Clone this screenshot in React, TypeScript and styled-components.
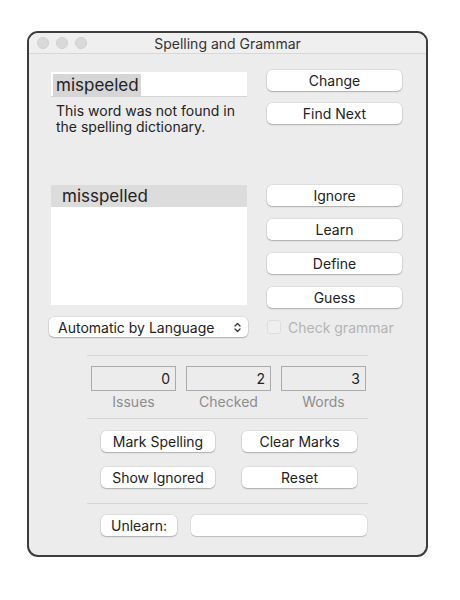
import React from 'react';
import styled, { createGlobalStyle } from 'styled-components';

const GlobalStyle = createGlobalStyle`
  html, body {
    margin: 0;
    padding: 0;
    background: #ffffff;
  }
  body {
    font-family: Inter, "Liberation Sans", sans-serif;
    color: #222222;
  }
`;

const Page = styled.div`
  padding: 31px 0 0 27px;
`;

const Window = styled.div`
  width: 401px;
  height: 526px;
  box-sizing: border-box;
  border: 2px solid #3d3d3d;
  border-radius: 11px;
  background: #ececec;
  overflow: hidden;
  display: flex;
  flex-direction: column;
`;

const TitleBar = styled.div`
  position: relative;
  height: 20px;
  flex-shrink: 0;
  border-bottom: 1px solid #d8d8d8;
  background: #efefef;
  display: flex;
  align-items: center;
  justify-content: center;
  font-size: 14px;
  color: #333333;
`;

const Lights = styled.div`
  position: absolute;
  left: 8px;
  top: 4px;
  display: flex;
  gap: 7px;
`;

const Light = styled.span`
  width: 12px;
  height: 12px;
  border-radius: 50%;
  background: #d9d9d9;
  border: 0.5px solid #cfcfcf;
  box-sizing: border-box;
`;

const Content = styled.div`
  display: flex;
  flex-direction: column;
  padding: 0 0 0 22px;
`;

const Row = styled.div<{ $top: number }>`
  display: flex;
  align-items: flex-start;
  gap: 20px;
  margin-top: ${({ $top }) => $top}px;
`;

const LeftCol = styled.div`
  width: 196px;
  display: flex;
  flex-direction: column;
`;

const RightCol = styled.div<{ $gap: number }>`
  width: 135px;
  display: flex;
  flex-direction: column;
  gap: ${({ $gap }) => $gap}px;
`;

const WordField = styled.div`
  margin-top: 2px;
  height: 25px;
  background: #ffffff;
  box-shadow: inset 0 -1px 0 #d4d4d4;
  display: flex;
  align-items: center;
  padding-left: 2px;
`;

const Selection = styled.span`
  background: #d6d6d6;
  font-size: 17px;
  line-height: 22px;
  padding: 0 2px 0 3px;
  color: #222222;
`;

const Hint = styled.div`
  margin-top: 6px;
  padding-left: 5px;
  font-size: 14px;
  line-height: 16px;
  color: #222222;
`;

const Button = styled.button<{ $w?: number }>`
  width: ${({ $w }) => ($w ? `${$w}px` : '100%')};
  height: 21px;
  padding: 0;
  border: none;
  border-radius: 5px;
  background: #ffffff;
  box-shadow: 0 0 0 0.5px rgba(0, 0, 0, 0.12), 0 1px 1.5px rgba(0, 0, 0, 0.22);
  font-family: Inter, "Liberation Sans", sans-serif;
  font-size: 14px;
  color: #222222;
  display: flex;
  align-items: center;
  justify-content: center;
  flex-shrink: 0;
`;

const List = styled.div`
  height: 120px;
  background: #ffffff;
  display: flex;
  flex-direction: column;
`;

const ListItem = styled.div<{ $selected?: boolean }>`
  height: 22px;
  padding-left: 11px;
  display: flex;
  align-items: center;
  font-size: 17px;
  color: #222222;
  background: ${({ $selected }) => ($selected ? '#dcdcdc' : 'transparent')};
`;

const Popup = styled.div`
  margin-left: -2px;
  width: 199px;
  height: 20px;
  box-sizing: border-box;
  border-radius: 5px;
  background: #ffffff;
  box-shadow: 0 0 0 0.5px rgba(0, 0, 0, 0.12), 0 1px 1.5px rgba(0, 0, 0, 0.22);
  display: flex;
  align-items: center;
  justify-content: space-between;
  padding: 0 7px 0 9px;
  font-size: 14px;
  color: #222222;
`;

const CheckRow = styled.label`
  height: 20px;
  display: flex;
  align-items: center;
  gap: 7px;
  font-size: 14px;
  color: #b4b4b4;
`;

const CheckBox = styled.span`
  width: 14px;
  height: 14px;
  box-sizing: border-box;
  border-radius: 3px;
  background: #efefef;
  border: 1px solid #dddddd;
`;

const Separator = styled.div<{ $top: number }>`
  margin: ${({ $top }) => $top}px 0 0 36px;
  width: 281px;
  height: 1px;
  background: #d5d5d5;
`;

const Counts = styled.div`
  margin: 10px 0 0 40px;
  display: grid;
  grid-template-columns: repeat(3, 85px);
  column-gap: 10px;
`;

const Count = styled.div`
  display: flex;
  flex-direction: column;
  align-items: stretch;
`;

const CountBox = styled.div`
  height: 25px;
  box-sizing: border-box;
  border: 1px solid #ababab;
  background: #ececec;
  display: flex;
  align-items: center;
  justify-content: flex-end;
  padding-right: 5px;
  font-size: 14px;
  color: #222222;
`;

const CountLabel = styled.div`
  margin-top: 2px;
  line-height: 18px;
  text-align: center;
  font-size: 14px;
  color: #8c8c8c;
`;

const ButtonGrid = styled.div`
  margin: 12px 0 0 50px;
  display: grid;
  grid-template-columns: 114px 115px;
  column-gap: 27px;
  row-gap: 15px;
`;

const UnlearnRow = styled.div`
  margin: 11px 0 0 50px;
  display: flex;
  gap: 14px;
`;

const UnlearnField = styled.div`
  width: 176px;
  height: 21px;
  border-radius: 5px;
  background: #ffffff;
  box-shadow: 0 0 0 0.5px rgba(0, 0, 0, 0.1), 0 0.5px 1px rgba(0, 0, 0, 0.15);
`;

const UpDown = () => (
  <svg width="7" height="11" viewBox="0 0 7 11" fill="none">
    <path d="M1 4 L3.5 1.5 L6 4" stroke="#333" strokeWidth="1.3" strokeLinecap="round" strokeLinejoin="round" />
    <path d="M1 7 L3.5 9.5 L6 7" stroke="#333" strokeWidth="1.3" strokeLinecap="round" strokeLinejoin="round" />
  </svg>
);

const counts = [
  { value: 0, label: 'Issues' },
  { value: 2, label: 'Checked' },
  { value: 3, label: 'Words' },
];

const App: React.FC = () => {
  return (
    <>
      <GlobalStyle />
      <Page>
        <Window>
          <TitleBar>
            <Lights>
              <Light />
              <Light />
              <Light />
            </Lights>
            Spelling and Grammar
          </TitleBar>
          <Content>
            <Row $top={16}>
              <LeftCol>
                <WordField>
                  <Selection>mispeeled</Selection>
                </WordField>
                <Hint>
                  This word was not found in
                  <br />
                  the spelling dictionary.
                </Hint>
              </LeftCol>
              <RightCol $gap={12}>
                <Button>Change</Button>
                <Button>Find Next</Button>
              </RightCol>
            </Row>

            <Row $top={50}>
              <LeftCol>
                <List>
                  <ListItem $selected>misspelled</ListItem>
                </List>
              </LeftCol>
              <RightCol $gap={13}>
                <Button>Ignore</Button>
                <Button>Learn</Button>
                <Button>Define</Button>
                <Button>Guess</Button>
              </RightCol>
            </Row>

            <Row $top={9}>
              <LeftCol>
                <Popup>
                  Automatic by Language
                  <UpDown />
                </Popup>
              </LeftCol>
              <CheckRow>
                <CheckBox />
                Check grammar
              </CheckRow>
            </Row>

            <Separator $top={18} />

            <Counts>
              {counts.map((c) => (
                <Count key={c.label}>
                  <CountBox>{c.value}</CountBox>
                  <CountLabel>{c.label}</CountLabel>
                </Count>
              ))}
            </Counts>

            <Separator $top={7} />

            <ButtonGrid>
              <Button>Mark Spelling</Button>
              <Button>Clear Marks</Button>
              <Button>Show Ignored</Button>
              <Button>Reset</Button>
            </ButtonGrid>

            <Separator $top={15} />

            <UnlearnRow>
              <Button $w={76}>Unlearn:</Button>
              <UnlearnField />
            </UnlearnRow>
          </Content>
        </Window>
      </Page>
    </>
  );
};

export default App;
